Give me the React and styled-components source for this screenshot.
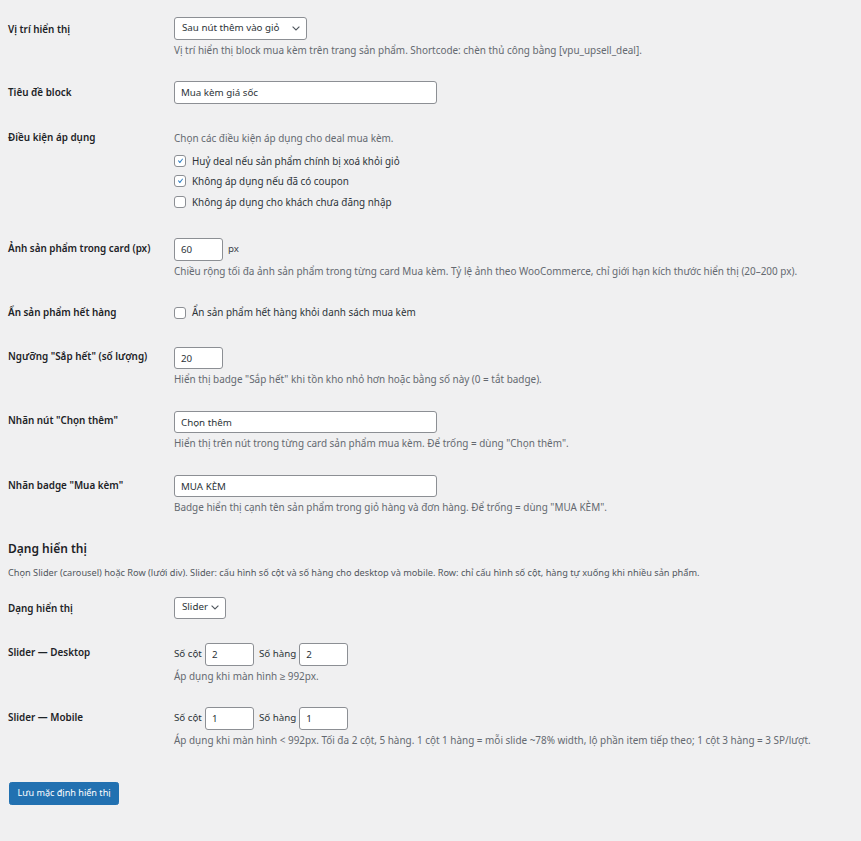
import React from "react";
import styled, { createGlobalStyle } from "styled-components";

const Global = createGlobalStyle`
  html, body { margin: 0; padding: 0; background: #f0f0f1; }
  body { font-family: "Noto Sans", "Liberation Sans", Arial, sans-serif; color: #3c434a; }
  * { box-sizing: border-box; }
`;

const Page = styled.div`
  min-height: 100vh;
  padding: 5px 8px 20px 8px;
`;

const FormTable = styled.div`
  display: flex;
  flex-direction: column;
`;

const Row = styled.div`
  display: grid;
  grid-template-columns: 166px 1fr;
`;

const Th = styled.div`
  padding-top: ${(p) => (p.$top ? p.$top : 16)}px;
  font-size: 9.9px;
  font-weight: 600;
  line-height: 13.5px;
  color: #1d2327;
`;

const Td = styled.div`
  padding: 12px 0;
  font-size: 9.75px;
  line-height: 1.3;
  color: #3c434a;
  display: flex;
  flex-direction: column;
  align-items: flex-start;
`;

const Field = styled.div`
  display: flex;
  align-items: center;
  gap: ${(p) => (p.$gap ? p.$gap : 5)}px;
  height: 22.5px;
  color: #2c3338;
  font-size: 9.75px;
`;

const Desc = styled.p`
  margin: 3px 0 0;
  font-size: 9.93px;
  line-height: 14.6px;
  color: #646970;
  white-space: nowrap;
`;

const Unit = styled.span`
  font-size: 9.75px;
  color: #3c434a;
`;

const InlineLabel = styled.span`
  margin-left: ${(p) => (p.$push ? 2 : 0)}px;
`;

const InputBox = styled.input`
  width: ${(p) => p.$w}px;
  height: 22.5px;
  padding: 0 6px;
  border: 1px solid #8c8f94;
  border-radius: 3px;
  background: #fff;
  font-family: inherit;
  font-size: 9.75px;
  color: #2c3338;
  outline: none;
  margin: 0;
`;

const SelectBox = styled.div`
  display: flex;
  align-items: center;
  justify-content: space-between;
  height: 22.5px;
  width: ${(p) => p.$w}px;
  padding: 0 6px 0 7px;
  border: 1px solid #8c8f94;
  border-radius: 3px;
  background: #fff;
  font-size: 9.75px;
  color: #2c3338;
`;

const CheckList = styled.div`
  display: flex;
  flex-direction: column;
  margin: 5.5px 0 2px;
`;

const CheckItem = styled.label`
  display: flex;
  align-items: center;
  gap: 6px;
  height: 20.5px;
  font-size: 9.9px;
  color: #2c3338;
`;

const Box = styled.span`
  width: 12px;
  height: 12px;
  border: 1px solid #8c8f94;
  border-radius: 3px;
  background: #fff;
  display: inline-flex;
  align-items: center;
  justify-content: center;
  flex: none;
`;

const Heading = styled.h2`
  margin: 11.5px 0 0;
  font-size: 12px;
  line-height: 19px;
  font-weight: 600;
  color: #1d2327;
`;

const SectionDesc = styled.p`
  margin: 8px 0 5.5px;
  font-size: 9.2px;
  line-height: 13.5px;
  color: #50575e;
  white-space: nowrap;
`;

const Submit = styled.div`
  display: flex;
  margin-top: 22.8px;
  padding-left: 1px;
`;

const Button = styled.button`
  height: 22.5px;
  padding: 0 7.5px;
  border: 1px solid #2271b1;
  border-radius: 2.5px;
  background: #2271b1;
  color: #fff;
  font-family: inherit;
  font-size: 9.1px;
  line-height: 20px;
  cursor: pointer;
`;

const Chevron = () => (
  <svg width="8" height="5" viewBox="0 0 8 5" fill="none">
    <polyline points="0.6,0.6 4,4 7.4,0.6" stroke="#50575e" strokeWidth="1.1" />
  </svg>
);

const Check = ({ checked, children }) => (
  <CheckItem>
    <Box>
      {checked && (
        <svg width="12" height="12" viewBox="0 0 20 20">
          <path d="M14.83 4.89l1.34.94-5.81 8.38H9.02L5.78 9.67l1.34-1.25 2.57 2.4z" fill="#3582c4" />
        </svg>
      )}
    </Box>
    {children}
  </CheckItem>
);

const PairField = ({ a, b }) => (
  <Field $gap={3}>
    <InlineLabel>Số cột</InlineLabel>
    <InputBox $w={49} defaultValue={a} />
    <InlineLabel $push>Số hàng</InlineLabel>
    <InputBox $w={49} defaultValue={b} />
  </Field>
);

export default function App() {
  return (
    <Page>
      <Global />
      <FormTable>
        <Row>
          <Th $top={17.5}>Vị trí hiển thị</Th>
          <Td>
            <SelectBox $w={133}>
              <span>Sau nút thêm vào giỏ</span>
              <Chevron />
            </SelectBox>
            <Desc>Vị trí hiển thị block mua kèm trên trang sản phẩm. Shortcode: chèn thủ công bằng [vpu_upsell_deal].</Desc>
          </Td>
        </Row>
        <Row>
          <Th $top={16.5}>Tiêu đề block</Th>
          <Td>
            <InputBox $w={263} defaultValue="Mua kèm giá sốc" />
          </Td>
        </Row>
        <Row>
          <Th $top={15}>Điều kiện áp dụng</Th>
          <Td>
            <Desc>Chọn các điều kiện áp dụng cho deal mua kèm.</Desc>
            <CheckList>
              <Check checked>Huỷ deal nếu sản phẩm chính bị xoá khỏi giỏ</Check>
              <Check checked>Không áp dụng nếu đã có coupon</Check>
              <Check>Không áp dụng cho khách chưa đăng nhập</Check>
            </CheckList>
          </Td>
        </Row>
        <Row>
          <Th>Ảnh sản phẩm trong card (px)</Th>
          <Td>
            <Field>
              <InputBox $w={49} defaultValue="60" />
              <Unit>px</Unit>
            </Field>
            <Desc>Chiều rộng tối đa ảnh sản phẩm trong từng card Mua kèm. Tỷ lệ ảnh theo WooCommerce, chỉ giới hạn kích thước hiển thị (20–200 px).</Desc>
          </Td>
        </Row>
        <Row>
          <Th $top={15.5}>Ẩn sản phẩm hết hàng</Th>
          <Td>
            <Check>Ẩn sản phẩm hết hàng khỏi danh sách mua kèm</Check>
          </Td>
        </Row>
        <Row>
          <Th $top={15}>Ngưỡng "Sắp hết" (số lượng)</Th>
          <Td>
            <InputBox $w={49} defaultValue="20" />
            <Desc>Hiển thị badge "Sắp hết" khi tồn kho nhỏ hơn hoặc bằng số này (0 = tắt badge).</Desc>
          </Td>
        </Row>
        <Row>
          <Th $top={15}>Nhãn nút "Chọn thêm"</Th>
          <Td>
            <InputBox $w={263} defaultValue="Chọn thêm" />
            <Desc>Hiển thị trên nút trong từng card sản phẩm mua kèm. Để trống = dùng "Chọn thêm".</Desc>
          </Td>
        </Row>
        <Row>
          <Th $top={16}>Nhãn badge "Mua kèm"</Th>
          <Td>
            <InputBox $w={263} defaultValue="MUA KÈM" />
            <Desc>Badge hiển thị cạnh tên sản phẩm trong giỏ hàng và đơn hàng. Để trống = dùng "MUA KÈM".</Desc>
          </Td>
        </Row>
      </FormTable>

      <Heading>Dạng hiển thị</Heading>
      <SectionDesc>Chọn Slider (carousel) hoặc Row (lưới div). Slider: cấu hình số cột và số hàng cho desktop và mobile. Row: chỉ cấu hình số cột, hàng tự xuống khi nhiều sản phẩm.</SectionDesc>

      <FormTable>
        <Row>
          <Th $top={17.5}>Dạng hiển thị</Th>
          <Td>
            <SelectBox $w={52}>
              <span>Slider</span>
              <Chevron />
            </SelectBox>
          </Td>
        </Row>
        <Row>
          <Th $top={15}>Slider — Desktop</Th>
          <Td>
            <PairField a="2" b="2" />
            <Desc>Áp dụng khi màn hình ≥ 992px.</Desc>
          </Td>
        </Row>
        <Row>
          <Th $top={16}>Slider — Mobile</Th>
          <Td>
            <PairField a="1" b="1" />
            <Desc>Áp dụng khi màn hình &lt; 992px. Tối đa 2 cột, 5 hàng. 1 cột 1 hàng = mỗi slide ~78% width, lộ phần item tiếp theo; 1 cột 3 hàng = 3 SP/lượt.</Desc>
          </Td>
        </Row>
      </FormTable>

      <Submit>
        <Button>Lưu mặc định hiển thị</Button>
      </Submit>
    </Page>
  );
}
